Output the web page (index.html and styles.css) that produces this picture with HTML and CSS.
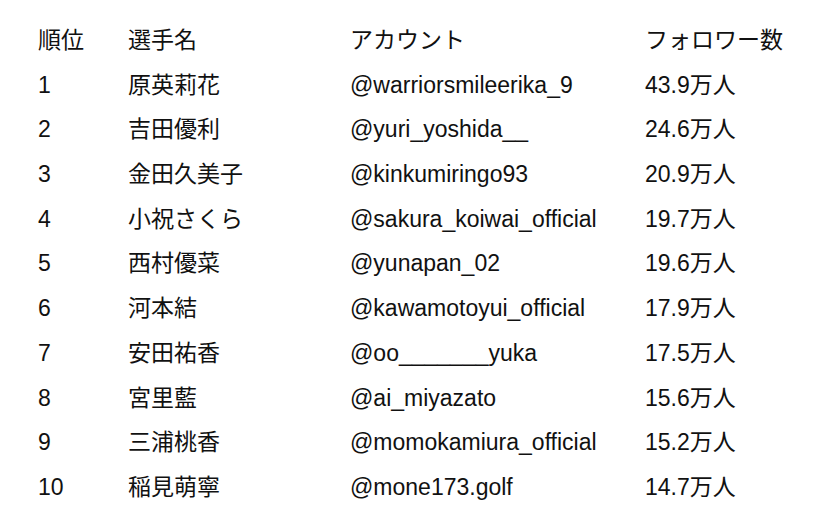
FILE: index.html
```html
<!DOCTYPE html>
<html lang="ja">
<head>
<meta charset="utf-8">
<link rel="stylesheet" href="styles.css">
</head>
<body>
<div class="table">
  <div class="row head"><span>順位</span><span>選手名</span><span>アカウント</span><span>フォロワー数</span></div>
  <div class="row"><span>1</span><span>原英莉花</span><span>@warriorsmileerika_9</span><span>43.9万人</span></div>
  <div class="row"><span>2</span><span>吉田優利</span><span>@yuri_yoshida__</span><span>24.6万人</span></div>
  <div class="row"><span>3</span><span>金田久美子</span><span>@kinkumiringo93</span><span>20.9万人</span></div>
  <div class="row"><span>4</span><span>小祝さくら</span><span>@sakura_koiwai_official</span><span>19.7万人</span></div>
  <div class="row"><span>5</span><span>西村優菜</span><span>@yunapan_02</span><span>19.6万人</span></div>
  <div class="row"><span>6</span><span>河本結</span><span>@kawamotoyui_official</span><span>17.9万人</span></div>
  <div class="row"><span>7</span><span>安田祐香</span><span>@oo_______yuka</span><span>17.5万人</span></div>
  <div class="row"><span>8</span><span>宮里藍</span><span>@ai_miyazato</span><span>15.6万人</span></div>
  <div class="row"><span>9</span><span>三浦桃香</span><span>@momokamiura_official</span><span>15.2万人</span></div>
  <div class="row"><span>10</span><span>稲見萌寧</span><span>@mone173.golf</span><span>14.7万人</span></div>
</div>
</body>
</html>
```
FILE: styles.css
```css
html, body {
  margin: 0;
  padding: 0;
  background: #ffffff;
}
body {
  font-family: "Liberation Sans", "Noto Sans CJK JP", sans-serif;
  font-size: 23px;
  color: #111111;
}
.table {
  display: flex;
  flex-direction: column;
  padding: 22px 0 0 38px;
}
.row {
  display: grid;
  grid-template-columns: 90px 222px 295px 1fr;
  height: 44.7px;
  line-height: 36px;
}
```
